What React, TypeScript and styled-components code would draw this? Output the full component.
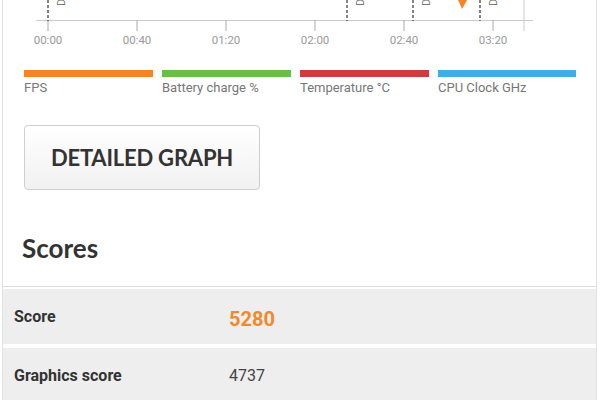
import React from "react";
import styled, { createGlobalStyle } from "styled-components";

const Global = createGlobalStyle`
  html, body { margin: 0; padding: 0; background: #ffffff; }
  body { font-family: Roboto, "Liberation Sans", sans-serif; }
`;

const Page = styled.div`
  width: 600px;
  height: 400px;
  overflow: hidden;
  background: #ffffff;
`;

const Card = styled.div`
  margin: 0 3px 0 2px;
  border-left: 1px solid #e2e2e2;
  border-right: 1px solid #e2e2e2;
  min-height: 420px;
  display: flex;
  flex-direction: column;
`;

const ChartSvg = styled.svg`
  display: block;
  flex-shrink: 0;
  width: 594px;
  height: 52px;
`;

const Legend = styled.div`
  display: grid;
  grid-template-columns: 129px 129px 129px 138px;
  column-gap: 9px;
  padding: 18px 0 0 21px;
`;

const LegendItem = styled.div`
  display: flex;
  flex-direction: column;
`;

const LegendBar = styled.div<{ $color: string }>`
  height: 7px;
  background: ${(p) => p.$color};
`;

const LegendLabel = styled.div`
  font-family: Roboto, "Liberation Sans", sans-serif;
  font-size: 13px;
  line-height: 16px;
  margin-top: 3px;
  color: #777777;
`;

const ButtonRow = styled.div`
  padding: 29px 0 0 21px;
`;

const GraphButton = styled.button`
  width: 236px;
  height: 65px;
  border: 1px solid #cfcfcf;
  border-radius: 4px;
  background: linear-gradient(#ffffff, #f1f1f1);
  font-family: Lato, "Liberation Sans", sans-serif;
  font-weight: 700;
  font-size: 22px;
  color: #333333;
  letter-spacing: -0.2px;
  padding: 0;
  cursor: pointer;
`;

const Heading = styled.h2`
  margin: 0;
  padding: 42px 0 0 19px;
  font-family: Lato, "Liberation Sans", sans-serif;
  font-weight: 700;
  font-size: 26px;
  line-height: 32px;
  color: #333333;
`;

const Divider = styled.div`
  margin-top: 22px;
  height: 1px;
  flex-shrink: 0;
  background: #dddddd;
`;

const Rows = styled.div`
  display: flex;
  flex-direction: column;
  gap: 4px;
  padding-top: 2px;
`;

const Row = styled.div<{ $h: number }>`
  height: ${(p) => p.$h}px;
  flex-shrink: 0;
  background: #eeeeee;
  display: grid;
  grid-template-columns: 215px 1fr;
  align-items: center;
  padding-left: 11px;
`;

const RowLabel = styled.div`
  font-family: Roboto, "Liberation Sans", sans-serif;
  font-weight: 700;
  font-size: 16px;
  color: #333333;
`;

const RowValue = styled.div<{ $main?: boolean }>`
  font-family: Roboto, "Liberation Sans", sans-serif;
  font-weight: ${(p) => (p.$main ? 700 : 400)};
  font-size: ${(p) => (p.$main ? 20 : 16)}px;
  color: ${(p) => (p.$main ? "#f08a2c" : "#444444")};
  padding-top: ${(p) => (p.$main ? 4 : 0)}px;
`;

const ticks = [
  { x: 48, t: "00:00" },
  { x: 137, t: "00:40" },
  { x: 226, t: "01:20" },
  { x: 315, t: "02:00" },
  { x: 404, t: "02:40" },
  { x: 493, t: "03:20" },
];

const markers = [48, 347, 413, 480];

const legend = [
  { c: "#f58426", t: "FPS" },
  { c: "#6cbd45", t: "Battery charge %" },
  { c: "#d13b3f", t: "Temperature °C" },
  { c: "#40aee6", t: "CPU Clock GHz" },
];

export default function App() {
  return (
    <Page>
      <Global />
      <Card>
        <ChartSvg viewBox="3 0 594 52">
          <line x1={36} y1={20.5} x2={533} y2={20.5} stroke="#cccccc" strokeWidth={1.2} />
          <line x1={524} y1={0} x2={524} y2={31} stroke="#cccccc" strokeWidth={1} />
          {ticks.map((k) => (
            <g key={k.t}>
              <line x1={k.x} y1={20} x2={k.x} y2={31} stroke="#aaaaaa" strokeWidth={1} />
              <text
                x={k.x}
                y={44}
                textAnchor="middle"
                fontFamily="Roboto, 'Liberation Sans', sans-serif"
                fontSize={11.5}
                fill="#9a9a9a"
              >
                {k.t}
              </text>
            </g>
          ))}
          {markers.map((x) => (
            <g key={x}>
              <line x1={x} y1={0} x2={x} y2={21} stroke="#333333" strokeWidth={1.2} strokeDasharray="3 2" />
              <text
                transform={`translate(${x + 17} 6) rotate(-90)`}
                fontFamily="Roboto, 'Liberation Sans', sans-serif"
                fontSize={11}
                fill="#777777"
              >
                Demo
              </text>
            </g>
          ))}
          <path d="M458 0 L467 0 Q465 4 462 9 Q460 4 458 0 Z" fill="#f58426" />
        </ChartSvg>
        <Legend>
          {legend.map((l) => (
            <LegendItem key={l.t}>
              <LegendBar $color={l.c} />
              <LegendLabel>{l.t}</LegendLabel>
            </LegendItem>
          ))}
        </Legend>
        <ButtonRow>
          <GraphButton>DETAILED GRAPH</GraphButton>
        </ButtonRow>
        <Heading>Scores</Heading>
        <Divider />
        <Rows>
          <Row $h={55}>
            <RowLabel>Score</RowLabel>
            <RowValue $main>5280</RowValue>
          </Row>
          <Row $h={55}>
            <RowLabel>Graphics score</RowLabel>
            <RowValue>4737</RowValue>
          </Row>
        </Rows>
      </Card>
    </Page>
  );
}
